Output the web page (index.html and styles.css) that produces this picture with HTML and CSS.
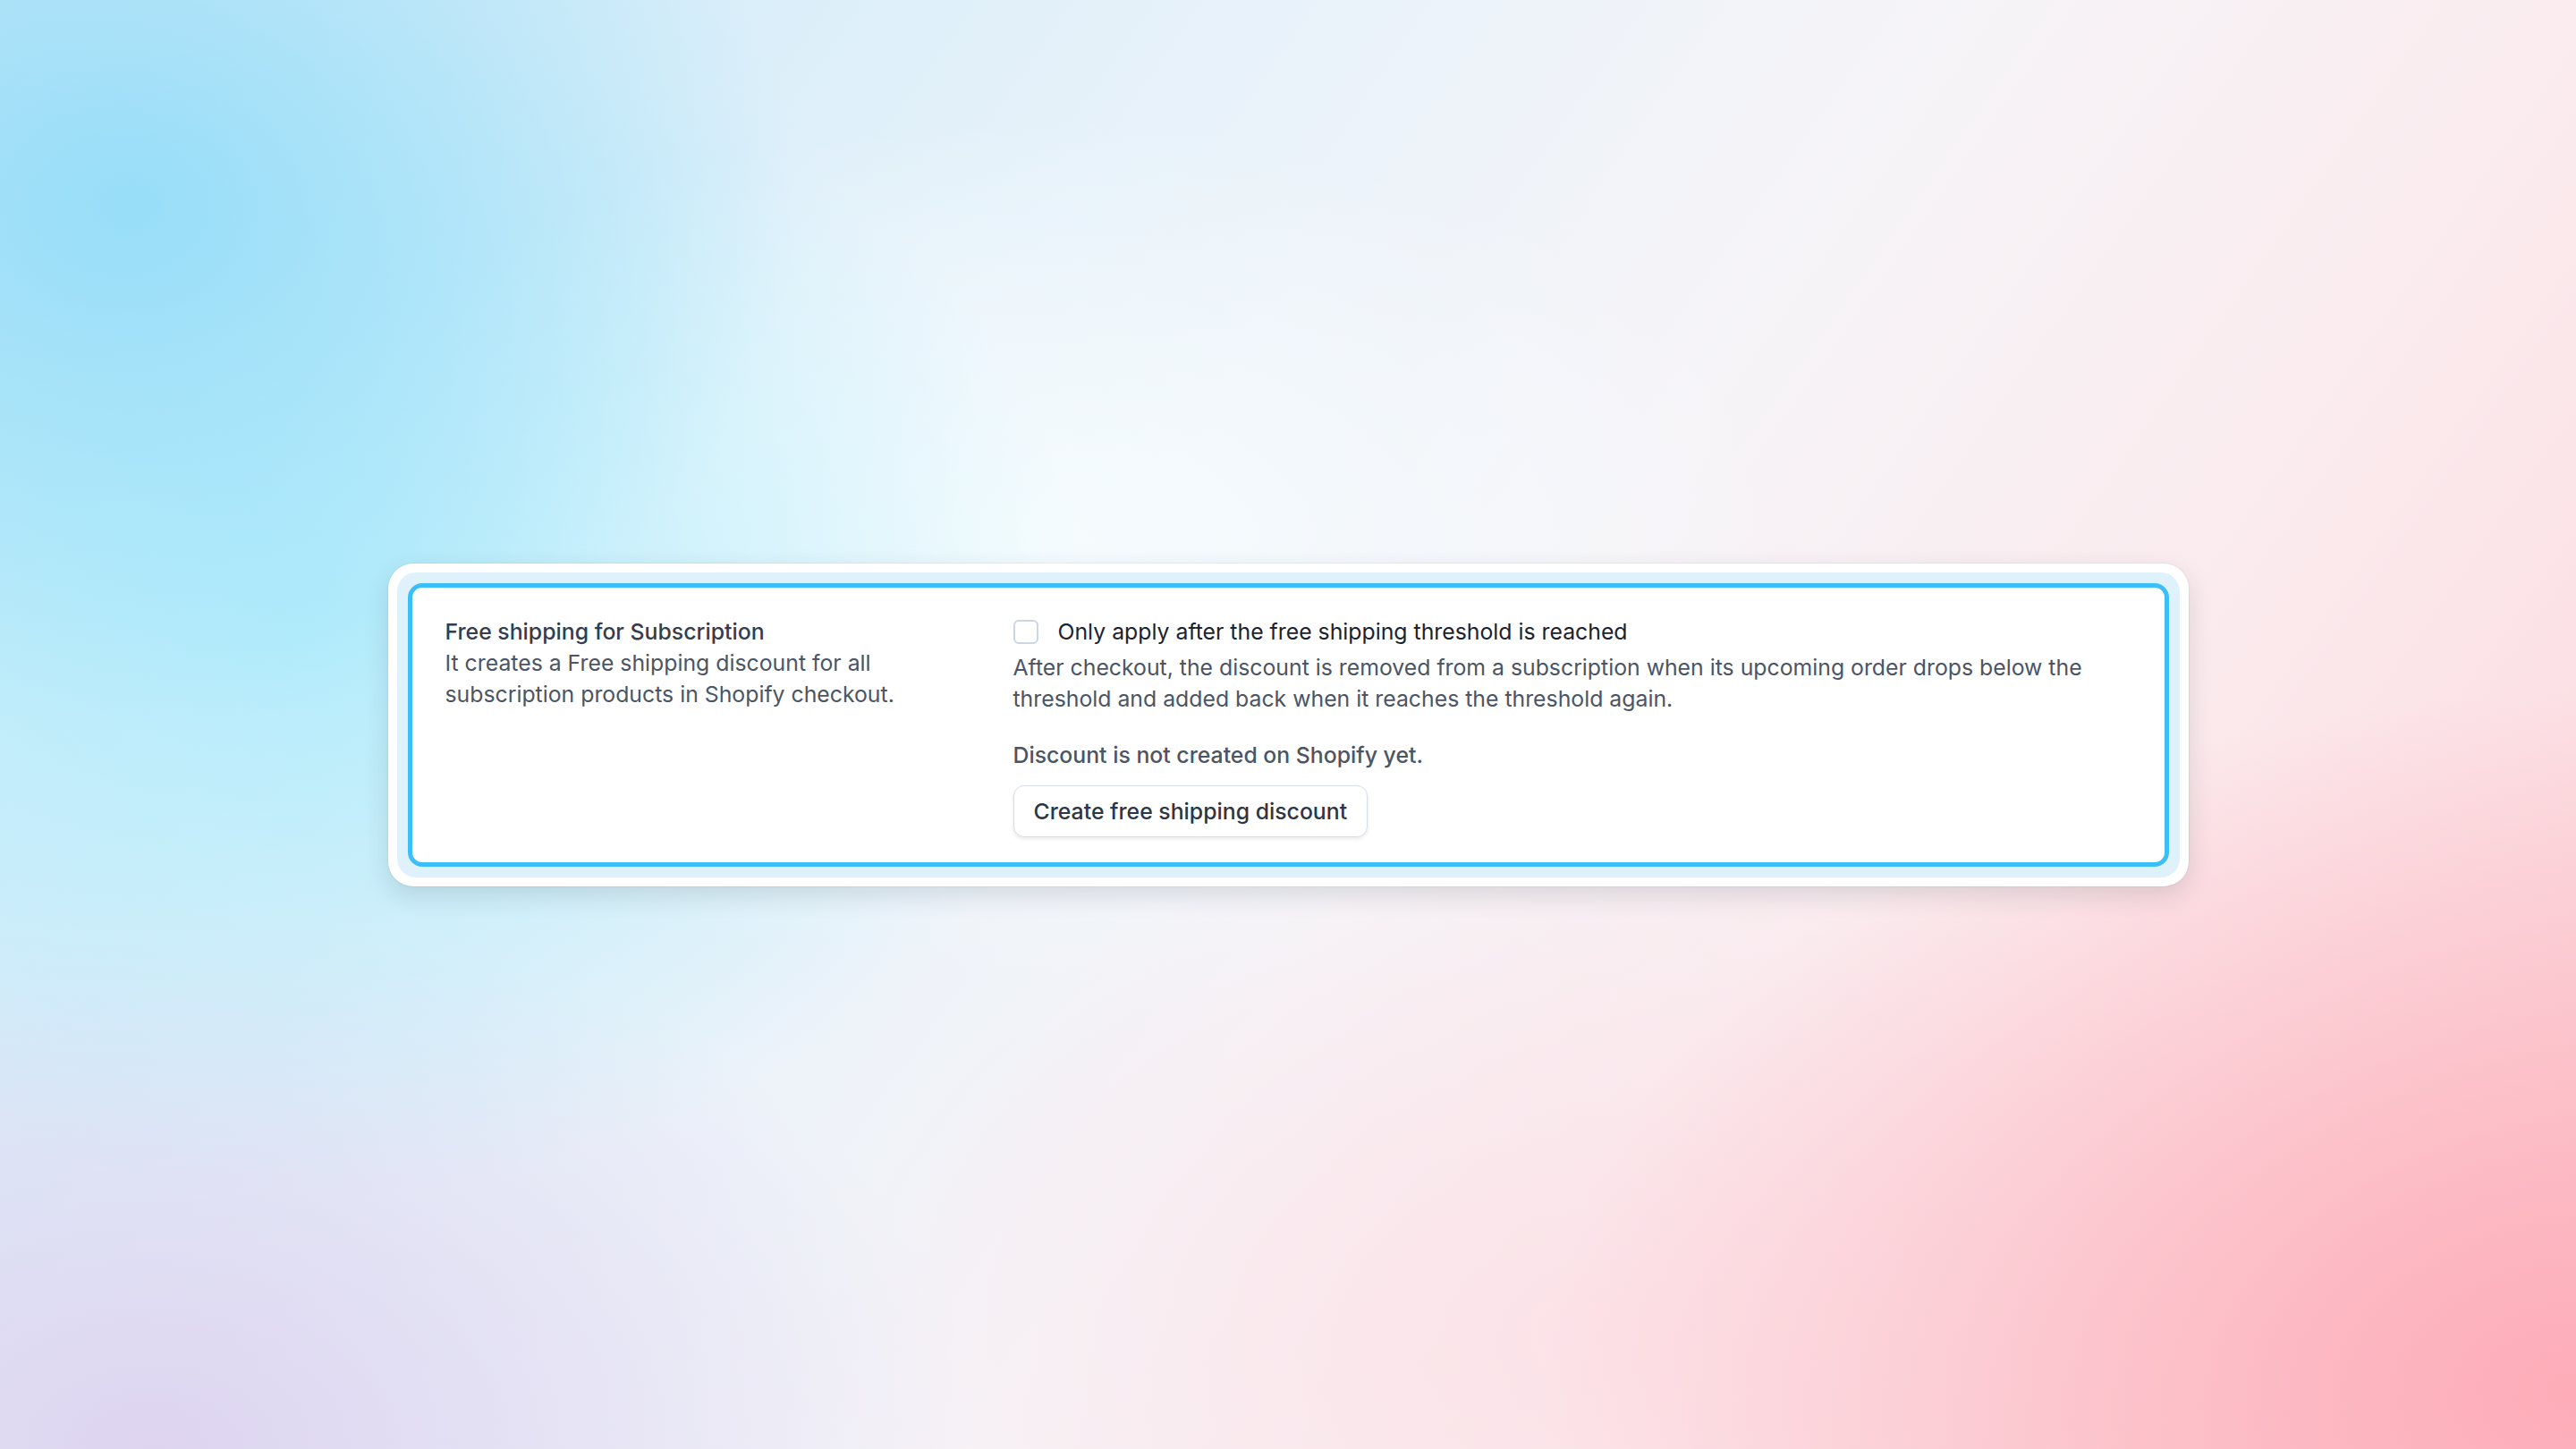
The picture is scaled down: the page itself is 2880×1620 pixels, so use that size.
FILE: index.html
```
<!DOCTYPE html>
<html lang="en">
<head>
    <meta charset="UTF-8">
    <meta name="viewport" content="width=device-width, initial-scale=1.0">
    <link rel="stylesheet" href="styles.css">
    <title>Free shipping for Subscription</title>
</head>
<body>
    <div class="frame">
        <div class="ring">
            <div class="card">
                <div class="setting-info">
                    <h2 class="setting-title">Free shipping for Subscription</h2>
                    <p class="setting-desc">It creates a Free shipping discount for all subscription products in Shopify checkout.</p>
                </div>
                <div class="setting-body">
                    <label class="check-row">
                        <input type="checkbox" class="check-box">
                        <span class="check-label">Only apply after the free shipping threshold is reached</span>
                    </label>
                    <p class="help-text">After checkout, the discount is removed from a subscription when its upcoming order drops below the threshold and added back when it reaches the threshold again.</p>
                    <p class="status-text">Discount is not created on Shopify yet.</p>
                    <button class="create-button">Create free shipping discount</button>
                </div>
            </div>
        </div>
    </div>
</body>
</html>
```
FILE: styles.css
```
body {
    font-family: Inter, "Noto Sans", sans-serif;
    margin: 0;
    padding: 0;
    min-height: 100vh;
    display: flex;
    align-items: center;
    justify-content: center;
    background:
        radial-gradient(ellipse 26% 36% at 5% 14%, rgba(140, 218, 248, 0.8), rgba(140, 218, 248, 0) 100%),
        radial-gradient(ellipse 30% 40% at 12% 42%, rgba(172, 236, 252, 0.85), rgba(172, 236, 252, 0) 100%),
        radial-gradient(ellipse 40% 48% at 100% 96%, rgba(253, 170, 182, 0.95), rgba(253, 170, 182, 0) 100%),
        radial-gradient(ellipse 30% 35% at 62% 92%, rgba(252, 222, 228, 0.7), rgba(252, 222, 228, 0) 100%),
        radial-gradient(ellipse 32% 38% at 6% 100%, rgba(222, 212, 240, 1), rgba(222, 212, 240, 0) 100%),
        radial-gradient(ellipse 30% 30% at 40% 38%, rgba(246, 252, 254, 1), rgba(246, 252, 254, 0) 100%),
        linear-gradient(125deg, #c6e9f8 0%, #e8f2fa 35%, #f6f4f8 55%, #fbeaed 75%, #fcd2d8 100%);
}

.frame {
    width: 2013px;
    box-sizing: border-box;
    padding: 10px;
    background-color: #ffffff;
    border-radius: 28px;
    box-shadow: 0 0 0 1px rgba(0, 0, 0, 0.04), 0 10px 28px rgba(30, 40, 60, 0.14);
}

.ring {
    padding: 12px;
    background-color: #dff2fc;
    border-radius: 21px;
}

.card {
    display: grid;
    grid-template-columns: 600px 1fr;
    column-gap: 35px;
    padding: 32px 37px 28px;
    background-color: #ffffff;
    border: 5px solid #3bbff8;
    border-radius: 16px;
    font-size: 24.8px;
    line-height: 35px;
}

.setting-title {
    margin: 0;
    font-size: 24.8px;
    font-weight: 500;
    color: #343d4c;
}

.setting-desc {
    margin: 0;
    color: #4b5565;
}

.check-row {
    display: flex;
    align-items: center;
    gap: 22px;
}

.check-box {
    appearance: none;
    margin: 0;
    width: 28px;
    height: 27px;
    border: 2px solid #cdd7e2;
    border-radius: 6px;
    background-color: #ffffff;
}

.check-label {
    color: #1b2230;
}

.help-text {
    margin: 5px 0 0;
    color: #4b5565;
}

.status-text {
    margin: 28px 0 0;
    font-weight: 500;
    color: #4b5565;
}

.create-button {
    margin-top: 16px;
    height: 58px;
    padding: 0 22px;
    font-family: inherit;
    font-size: 24.8px;
    font-weight: 500;
    color: #2d3646;
    background-color: #ffffff;
    border: 1px solid #d8dee8;
    border-radius: 12px;
    box-shadow: 0 2px 4px rgba(30, 40, 60, 0.1);
    cursor: pointer;
}
```
